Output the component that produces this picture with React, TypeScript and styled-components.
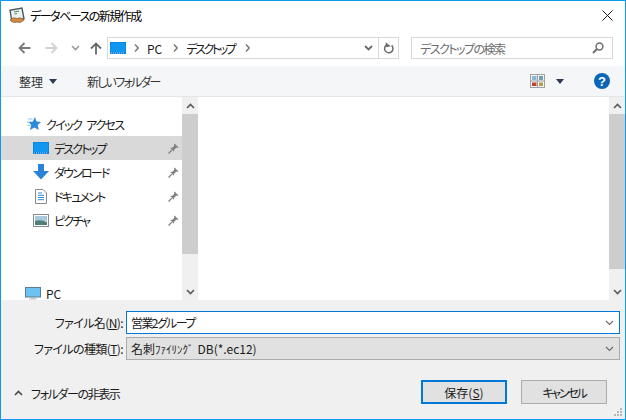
import React from "react";
import styled, { createGlobalStyle } from "styled-components";

const GlobalStyle = createGlobalStyle`
  html, body {
    margin: 0;
    padding: 0;
    background: #ffffff;
  }
  * {
    box-sizing: border-box;
  }
`;

const Dialog = styled.div`
  width: 626px;
  height: 420px;
  display: flex;
  flex-direction: column;
  border: 1px solid #0a9bf0;
  background: #ffffff;
  font-family: "Noto Sans CJK JP", "Liberation Sans", sans-serif;
  font-size: 12px;
  font-feature-settings: "palt";
  letter-spacing: -1.4px;
  color: #1a1a1a;
  overflow: hidden;
`;

const Latin = styled.span`
  letter-spacing: 0;
`;

const TitleBar = styled.div`
  height: 29px;
  flex: none;
  display: flex;
  align-items: center;
  padding: 0 12px 0 8px;
  gap: 5px;
`;

const TitleText = styled.span`
  flex: 1;
  font-size: 12px;
  letter-spacing: -1.5px;
  color: #000000;
`;

const NavRow = styled.div`
  height: 36px;
  flex: none;
  display: flex;
  align-items: center;
  padding: 0 12px 0 12px;
`;

const NavButtons = styled.div`
  width: 94px;
  flex: none;
  display: flex;
  align-items: center;
`;

const NavIcon = styled.span<{ $w: number }>`
  width: ${(p) => p.$w}px;
  display: flex;
  justify-content: center;
  flex: none;
`;

const AddressBar = styled.div`
  width: 292px;
  height: 22px;
  flex: none;
  border: 1px solid #d9d9d9;
  display: flex;
  align-items: center;
  padding-left: 2px;
`;

const AddressIcon = styled.span`
  display: flex;
  margin-right: 8px;
`;

const Crumb = styled.span`
  color: #1a1a1a;
  margin: 0 11px 0 8px;
  letter-spacing: -2.4px;
`;

const AddressEnd = styled.div`
  margin-left: auto;
  display: flex;
  height: 100%;
  align-items: center;
`;

const RefreshCell = styled.span`
  width: 20px;
  height: 100%;
  border-left: 1px solid #d9d9d9;
  margin-left: 5px;
  display: flex;
  align-items: center;
  justify-content: center;
`;

const SearchBox = styled.div`
  width: 202px;
  height: 22px;
  flex: none;
  margin-left: 12px;
  border: 1px solid #d9d9d9;
  display: flex;
  align-items: center;
  justify-content: space-between;
  padding: 0 8px;
  color: #6d6d6d;
  letter-spacing: -1.5px;
`;

const Toolbar = styled.div`
  height: 31px;
  flex: none;
  background: #f5f6f7;
  border-bottom: 1px solid #e5e5e5;
  display: flex;
  align-items: center;
  padding: 0 15px 0 18px;
  color: #333333;
`;

const ToolLabel = styled.span`
  display: flex;
  align-items: center;
  gap: 6px;
  letter-spacing: 0;
`;

const NewFolder = styled.span`
  margin-left: 30px;
  margin-right: auto;
  letter-spacing: -1.8px;
`;

const ViewsCaret = styled.span`
  display: flex;
  margin-left: 11px;
`;

const HelpIcon = styled.span`
  width: 16px;
  height: 16px;
  border-radius: 50%;
  background: #0a66b8;
  color: #ffffff;
  font: bold 13px "Liberation Sans", sans-serif;
  letter-spacing: 0;
  display: flex;
  align-items: center;
  justify-content: center;
  margin-left: 30px;
`;

const Main = styled.div`
  height: 203px;
  flex: none;
  display: flex;
`;

const NavPane = styled.div`
  width: 181px;
  flex: none;
  padding-top: 15px;
  display: flex;
  flex-direction: column;
`;

const TreeRow = styled.div<{ $selected?: boolean; $indent: number }>`
  height: 24px;
  flex: none;
  display: flex;
  align-items: center;
  padding-left: ${(p) => p.$indent}px;
  padding-right: 3px;
  background: ${(p) => (p.$selected ? "#d9d9d9" : "transparent")};
  color: #1a1a1a;
`;

const TreeIcon = styled.span`
  width: 18px;
  height: 16px;
  flex: none;
  margin-right: 4px;
  display: flex;
  align-items: center;
  justify-content: center;
`;

const TreeLabel = styled.span<{ $tight?: boolean }>`
  flex: 1;
  letter-spacing: ${(p) => (p.$tight ? "-1.8px" : "-1.6px")};
  word-spacing: 4px;
`;

const TreeGap = styled.div`
  height: 49px;
  flex: none;
`;

const Scrollbar = styled.div<{ $thumbTop: number; $thumbHeight: number }>`
  width: 16px;
  flex: none;
  background: #f0f0f0;
  display: flex;
  flex-direction: column;
  position: relative;
  &::before {
    content: "";
    position: absolute;
    left: 0;
    right: 0;
    top: ${(p) => p.$thumbTop}px;
    height: ${(p) => p.$thumbHeight}px;
    background: #cdcdcd;
  }
`;

const ScrollArrow = styled.span<{ $bottom?: boolean }>`
  height: 17px;
  display: flex;
  align-items: center;
  justify-content: center;
  margin-top: ${(p) => (p.$bottom ? "auto" : "0")};
`;

const Divider = styled.div`
  width: 2px;
  flex: none;
`;

const Content = styled.div`
  flex: 1;
  background: #ffffff;
`;

const Footer = styled.div`
  flex: 1;
  background: #f0f0f0;
  display: flex;
  flex-direction: column;
  position: relative;
`;

const FieldRows = styled.div`
  padding: 11px 5px 0 0;
  display: grid;
  grid-template-columns: 125px 1fr;
  row-gap: 3px;
  align-items: center;
`;

const FieldLabel = styled.label`
  text-align: right;
  padding-right: 3px;
  color: #1a1a1a;
  line-height: 16px;
  letter-spacing: -0.6px;
  u {
    text-underline-offset: 1px;
  }
`;

const FieldBox = styled.div<{ $focused?: boolean }>`
  height: 23px;
  border: 1px solid ${(p) => (p.$focused ? "#0078d7" : "#ababab")};
  background: ${(p) => (p.$focused ? "#ffffff" : "#e1e1e1")};
  display: flex;
  align-items: center;
  justify-content: space-between;
  padding: 0 5px 0 4px;
  color: #1a1a1a;
  letter-spacing: -1.6px;
`;

const FileTypeName = styled.span`
  letter-spacing: 0;
`;

const NarrowKana = styled.span`
  font-size: 11px;
  font-feature-settings: normal;
  margin-right: 4px;
`;

const FooterBar = styled.div`
  margin-top: 20px;
  padding: 0 18px 0 13px;
  display: flex;
  align-items: center;
`;

const HideFolders = styled.span`
  display: flex;
  align-items: center;
  gap: 8px;
  margin-right: auto;
  margin-top: 2px;
  color: #1a1a1a;
`;

const DialogButton = styled.button<{ $primary?: boolean }>`
  width: 86px;
  height: 24px;
  margin-left: 14px;
  font: inherit;
  font-feature-settings: inherit;
  letter-spacing: ${(p) => (p.$primary ? "0" : "-2.2px")};
  color: #1a1a1a;
  background: #e1e1e1;
  border: ${(p) => (p.$primary ? "2px solid #0078d7" : "1px solid #adadad")};
  padding: 0;
  display: flex;
  align-items: center;
  justify-content: center;
`;

const Grip = styled.svg`
  position: absolute;
  right: 2px;
  bottom: 2px;
`;

const Chevron = ({ dir, color = "#5a5a5a", w = 1.6 }: { dir: "up" | "down"; color?: string; w?: number }) => (
  <svg width="9" height="6" viewBox="0 0 9 6">
    <path d={dir === "up" ? "M1 5 L4.5 1.5 L8 5" : "M1 1 L4.5 4.5 L8 1"} fill="none" stroke={color} strokeWidth={w} />
  </svg>
);

const Caret = ({ color = "#2b3a55" }: { color?: string }) => (
  <svg width="8" height="5" viewBox="0 0 8 5">
    <path d="M0 0 H8 L4 5 Z" fill={color} />
  </svg>
);

const CrumbArrow = () => (
  <svg width="5" height="8" viewBox="0 0 5 8">
    <path d="M1 0.5 L4.2 4 L1 7.5" fill="none" stroke="#7a7a7a" strokeWidth="1.5" />
  </svg>
);

const ArrowLeft = ({ color }: { color: string }) => (
  <svg width="13" height="12" viewBox="0 0 13 12">
    <path d="M12.5 6 H2 M6.5 1 L1.5 6 L6.5 11" fill="none" stroke={color} strokeWidth="1.8" />
  </svg>
);

const ArrowRight = ({ color }: { color: string }) => (
  <svg width="13" height="12" viewBox="0 0 13 12">
    <path d="M0.5 6 H11 M6.5 1 L11.5 6 L6.5 11" fill="none" stroke={color} strokeWidth="1.8" />
  </svg>
);

const ArrowUp = () => (
  <svg width="12" height="13" viewBox="0 0 12 13">
    <path d="M6 12.5 V2 M1 6.5 L6 1.5 L11 6.5" fill="none" stroke="#6a6a6a" strokeWidth="1.8" />
  </svg>
);

const AppIcon = () => (
  <svg width="16" height="17" viewBox="0 0 16 17">
    <path d="M1 3.2 L13 1 L15 12 L2.8 14 Z" fill="#eaf1f0" stroke="#4f5966" strokeWidth="1.4" />
    <path d="M5 5 L10 4.2 M5.5 7 L8 6.6" stroke="#4d8f55" strokeWidth="1" />
    <path d="M1 13 Q4 9.5 8 11.5 Q12 9.5 15 13 Q11 17 8 15 Q5 17 1 13 Z" fill="#d88a3c" stroke="#7a5a3a" strokeWidth="0.7" />
  </svg>
);

const DesktopIcon = ({ w = 16, h = 12 }: { w?: number; h?: number }) => (
  <svg width={w} height={h} viewBox="0 0 16 12">
    <rect x="0" y="0" width="16" height="12" fill="#0a7fe0" />
    <rect x="0.7" y="0.7" width="14.6" height="9.6" fill="#1098f0" />
    <path d="M1 11 H15" stroke="#d5ecfb" strokeWidth="0.8" strokeDasharray="1 1" />
  </svg>
);

const StarIcon = () => (
  <svg width="16" height="14" viewBox="0 0 16 14">
    <path d="M9.8 0 L11.6 4.4 L16 4.9 L12.7 8 L13.7 13 L9.5 10.4 L5 13 L6.2 8 L3.5 5 L8 4.4 Z" fill="#2c8bd8" />
    <path d="M3 2 H7.5 M2 5 H5 M2.5 8.5 H5.5" stroke="#8cc4ee" strokeWidth="1" />
  </svg>
);

const DownloadIcon = () => (
  <svg width="16" height="16" viewBox="0 0 16 16">
    <path d="M5 0 H11 V7 H16 L8 15.5 L0 7 H5 Z" fill="#2b82d9" />
  </svg>
);

const DocumentIcon = () => (
  <svg width="12" height="15" viewBox="0 0 12 15">
    <path d="M0.5 0.5 H8 L11.5 4 V14.5 H0.5 Z" fill="#ffffff" stroke="#8a8a8a" />
    <path d="M3 4 H7 M3 6.3 H9 M3 8.5 H9 M3 10.7 H9" stroke="#2c8bd8" strokeWidth="1" />
  </svg>
);

const PictureIcon = () => (
  <svg width="16" height="13" viewBox="0 0 16 13">
    <rect x="0.5" y="0.5" width="15" height="12" fill="#ffffff" stroke="#8a8a8a" />
    <rect x="2" y="2" width="12" height="5" fill="#a9c9dc" />
    <path d="M2 7 Q7 5 14 8 V11 H2 Z" fill="#4f7f78" />
  </svg>
);

const PinIcon = () => (
  <svg width="11" height="11" viewBox="0 0 10 10">
    <path d="M6 0.5 L9.5 4 L8.5 4.6 L7.6 4.2 L5.6 6.2 L5.4 8 L2 4.6 L3.8 4.4 L5.8 2.4 L5.4 1.5 Z" fill="#7f7f7f" />
    <path d="M3.4 6.6 L0.5 9.5" stroke="#7f7f7f" strokeWidth="1.1" />
  </svg>
);

const PcIcon = () => (
  <svg width="16" height="13" viewBox="0 0 16 13">
    <rect x="0.5" y="0.5" width="15" height="9.5" fill="#6cc3f2" stroke="#5a7d96" />
    <rect x="6" y="10.5" width="4" height="1" fill="#9aa7b0" />
    <rect x="4" y="11.5" width="8" height="1" fill="#b8c2ca" />
  </svg>
);

const RefreshIcon = () => (
  <svg width="11" height="12" viewBox="0 0 11 12">
    <path d="M8.6 3.4 A4.2 4.2 0 1 1 3.5 3" fill="none" stroke="#6a6a6a" strokeWidth="1.5" />
    <path d="M3 0 V5 H7.5 Z" fill="#6a6a6a" transform="rotate(-10 4 3)" />
  </svg>
);

const SearchIcon = () => (
  <svg width="12" height="12" viewBox="0 0 12 12">
    <circle cx="7.5" cy="4.5" r="3.4" fill="none" stroke="#6f6f6f" strokeWidth="1.5" />
    <path d="M5 7 L1 11" stroke="#6f6f6f" strokeWidth="2" />
  </svg>
);

const ViewsIcon = () => (
  <svg width="15" height="14" viewBox="0 0 15 14">
    <rect x="0.5" y="0.5" width="14" height="13" fill="#f5f6f7" stroke="#a0a0a0" />
    <path d="M7.5 0.5 V13.5 M0.5 7 H14.5" stroke="#a0a0a0" strokeWidth="1" />
    <rect x="2" y="2" width="4.5" height="4" fill="#8cb6d8" />
    <rect x="9" y="2" width="4" height="4" fill="#6f9fb0" />
    <rect x="2" y="8.5" width="4.5" height="3.5" fill="#c8402c" />
    <rect x="9" y="8.5" width="4" height="3.5" fill="#a8a04c" />
  </svg>
);

const treeItems = [
  { label: "デスクトップ", icon: <DesktopIcon />, selected: true },
  { label: "ダウンロード", icon: <DownloadIcon /> },
  { label: "ドキュメント", icon: <DocumentIcon /> },
  { label: "ピクチャ", icon: <PictureIcon /> },
];

const App = () => {
  return (
    <>
      <GlobalStyle />
      <Dialog>
        <TitleBar>
          <AppIcon />
          <TitleText>データベースの新規作成</TitleText>
          <svg width="11" height="11" viewBox="0 0 11 11">
            <path d="M0.5 0.5 L10.5 10.5 M10.5 0.5 L0.5 10.5" stroke="#1a1a1a" strokeWidth="1" />
          </svg>
        </TitleBar>
        <NavRow>
          <NavButtons>
            <NavIcon $w={23}><ArrowLeft color="#7a7a7a" /></NavIcon>
            <NavIcon $w={30}><ArrowRight color="#d2d2d2" /></NavIcon>
            <NavIcon $w={19}><Chevron dir="down" color="#9a9a9a" /></NavIcon>
            <NavIcon $w={22}><ArrowUp /></NavIcon>
          </NavButtons>
          <AddressBar>
            <AddressIcon><DesktopIcon /></AddressIcon>
            <CrumbArrow />
            <Crumb><Latin>PC</Latin></Crumb>
            <CrumbArrow />
            <Crumb>デスクトップ</Crumb>
            <CrumbArrow />
            <AddressEnd>
              <Chevron dir="down" color="#6a6a6a" w={1.8} />
              <RefreshCell><RefreshIcon /></RefreshCell>
            </AddressEnd>
          </AddressBar>
          <SearchBox>
            <span>デスクトップの検索</span>
            <SearchIcon />
          </SearchBox>
        </NavRow>
        <Toolbar>
          <ToolLabel>整理 <Caret /></ToolLabel>
          <NewFolder>新しいフォルダー</NewFolder>
          <ViewsIcon />
          <ViewsCaret><Caret /></ViewsCaret>
          <HelpIcon>?</HelpIcon>
        </Toolbar>
        <Main>
          <NavPane>
            <TreeRow $indent={23}>
              <TreeIcon><StarIcon /></TreeIcon>
              <TreeLabel>クイック アクセス</TreeLabel>
            </TreeRow>
            {treeItems.map((item) => (
              <TreeRow key={item.label} $indent={31} $selected={item.selected}>
                <TreeIcon>{item.icon}</TreeIcon>
                <TreeLabel $tight>{item.label}</TreeLabel>
                <PinIcon />
              </TreeRow>
            ))}
            <TreeGap />
            <TreeRow $indent={23}>
              <TreeIcon><PcIcon /></TreeIcon>
              <TreeLabel><Latin>PC</Latin></TreeLabel>
            </TreeRow>
          </NavPane>
          <Scrollbar $thumbTop={17} $thumbHeight={140}>
            <ScrollArrow><Chevron dir="up" /></ScrollArrow>
            <ScrollArrow $bottom><Chevron dir="down" /></ScrollArrow>
          </Scrollbar>
          <Divider />
          <Content />
          <Scrollbar $thumbTop={17} $thumbHeight={155}>
            <ScrollArrow><Chevron dir="up" /></ScrollArrow>
            <ScrollArrow $bottom><Chevron dir="down" /></ScrollArrow>
          </Scrollbar>
        </Main>
        <Footer>
          <FieldRows>
            <FieldLabel>ファイル名(<u>N</u>):</FieldLabel>
            <FieldBox $focused>
              <span>営業2グループ</span>
              <Chevron dir="down" color="#6a6a6a" w={1.1} />
            </FieldBox>
            <FieldLabel>ファイルの種類(<u>T</u>):</FieldLabel>
            <FieldBox>
              <FileTypeName>名刺<NarrowKana>ﾌｧｲﾘﾝｸﾞ</NarrowKana>DB(*.ec12)</FileTypeName>
              <Chevron dir="down" color="#6a6a6a" w={1.1} />
            </FieldBox>
          </FieldRows>
          <FooterBar>
            <HideFolders>
              <Chevron dir="up" color="#4a4a4a" />
              フォルダーの非表示
            </HideFolders>
            <DialogButton $primary>保存(<u>S</u>)</DialogButton>
            <DialogButton>キャンセル</DialogButton>
          </FooterBar>
          <Grip width="10" height="10" viewBox="0 0 10 10">
            <path d="M7 1h2v2h-2z M4 4h2v2h-2z M7 4h2v2h-2z M1 7h2v2h-2z M4 7h2v2h-2z M7 7h2v2h-2z" fill="#b8b8b8" />
          </Grip>
        </Footer>
      </Dialog>
    </>
  );
};

export default App;
